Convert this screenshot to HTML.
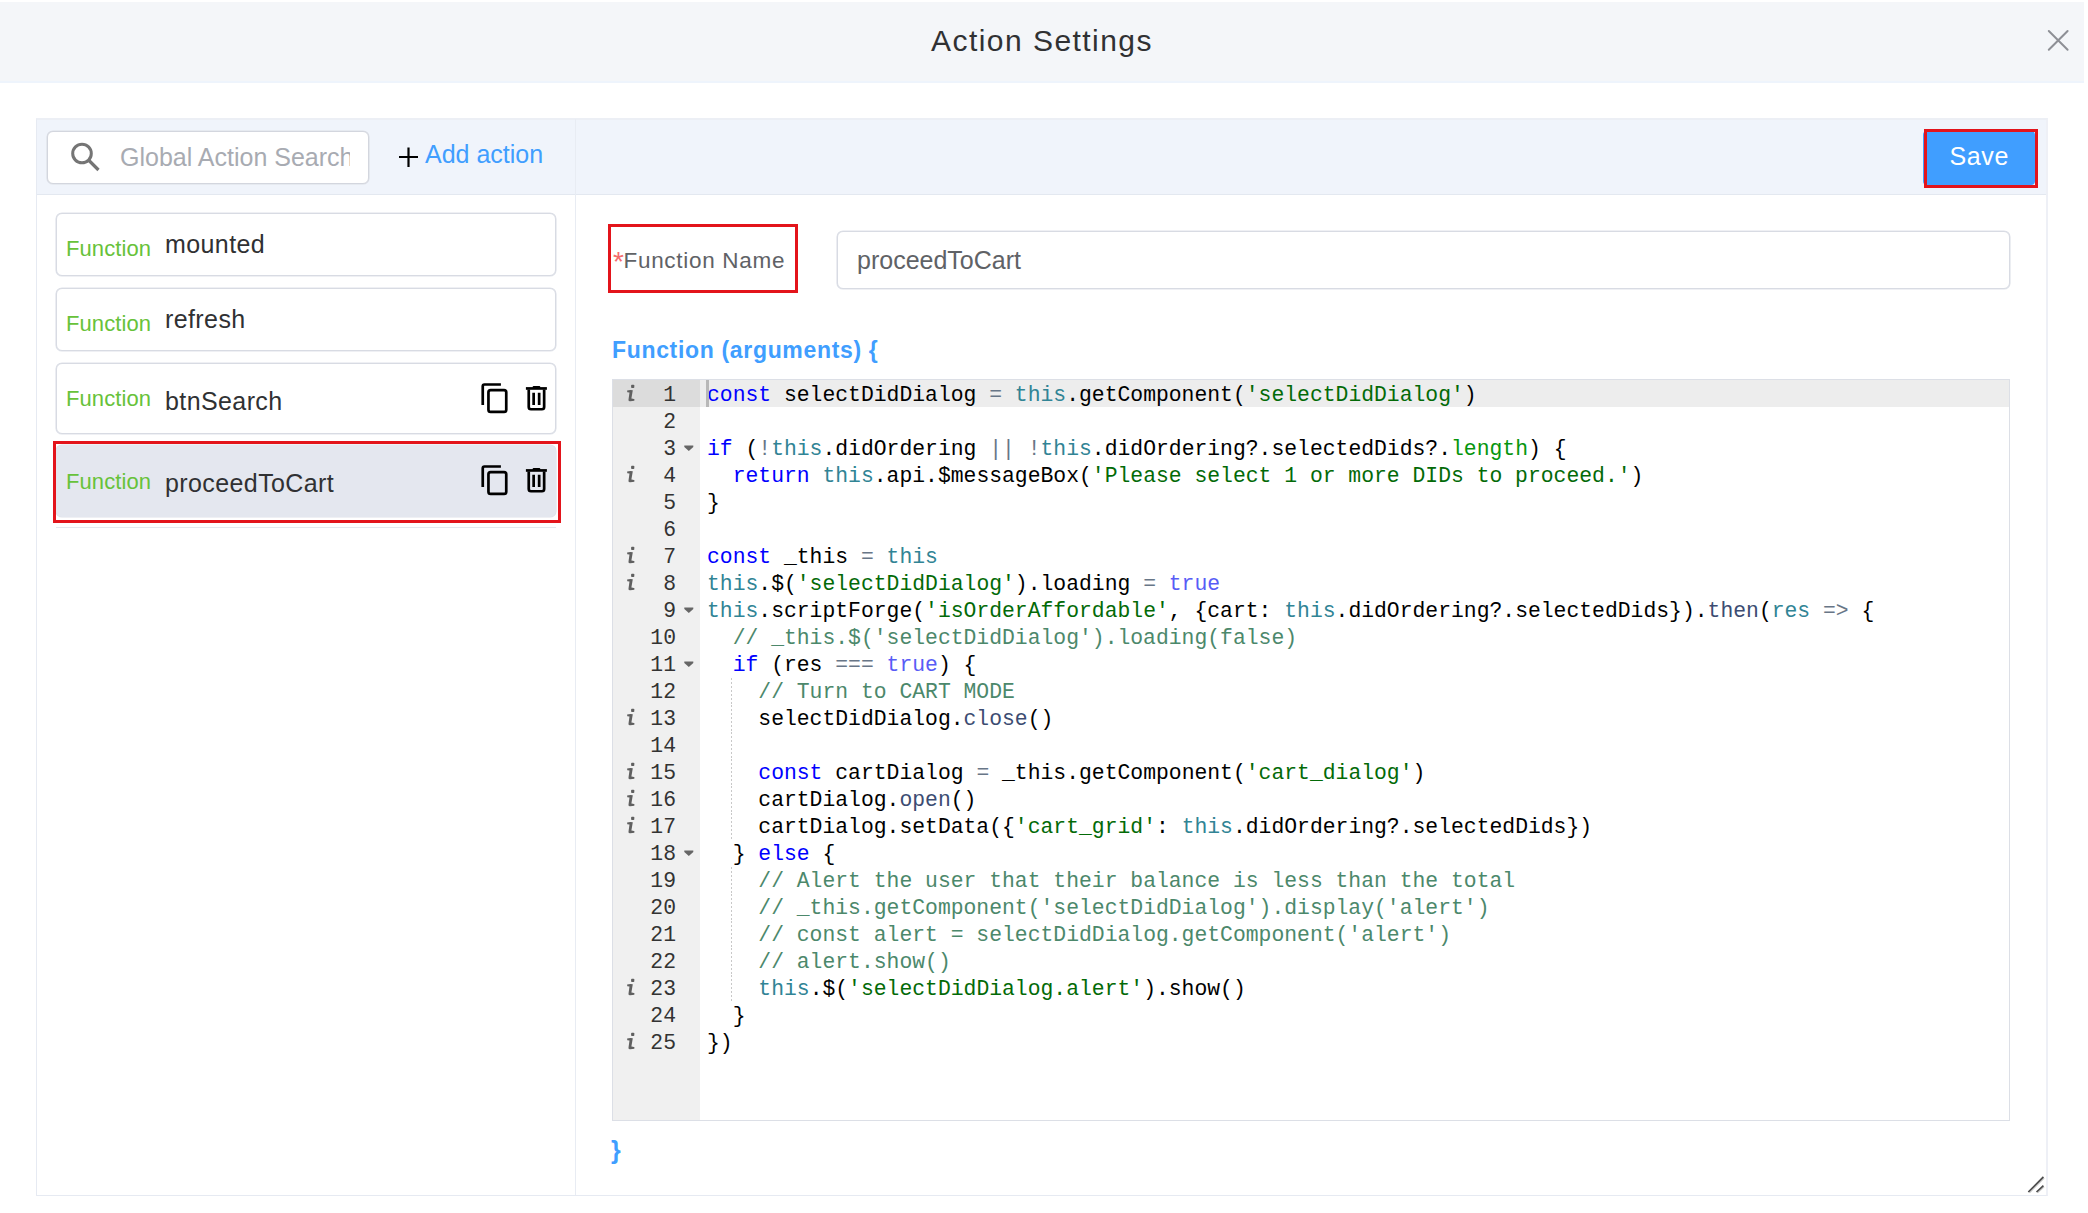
<!DOCTYPE html>
<html><head><meta charset="utf-8"><style>
*{box-sizing:border-box;margin:0;padding:0}
html,body{width:2088px;height:1213px;overflow:hidden;background:#fff;position:relative;font-family:"Liberation Sans",sans-serif}
.a{position:absolute}
#hdr{left:0;top:1.5px;width:2084px;height:79.5px;background:#f4f6f9}
#hdrb{left:0;top:81px;width:2084px;height:1.8px;background:#eef4fc}
#title{left:0;width:2084px;text-align:center;top:20.8px;font-size:30px;line-height:40px;color:#303133;letter-spacing:1.45px}
#panel{left:36px;top:118px;width:2012px;height:1078px;border:1px solid #e6eaf2;border-top:2px solid #eceff5;border-right:2px solid #eef0f6;background:#fff}
#tb{left:37px;top:120px;width:2009px;height:75px;background:#f0f4fb;border-bottom:1px solid #e3e8f0}
#vdiv{left:575px;top:119px;width:1px;height:1076px;background:#e8ecf3}
#search{left:47px;top:131px;width:322px;height:53px;border:1px solid #d3d6de;border-radius:6px;background:#fff;overflow:hidden;box-shadow:0 0 0 0.6px #dcdfe6}
#ph{left:72px;top:-1px;width:230px;overflow:hidden;white-space:nowrap;font-size:25px;line-height:52px;color:#a8abb2}
#add{left:425px;top:134.3px;font-size:25px;line-height:40px;color:#409eff}
.item{left:56px;width:500px;border:1px solid #d8dbe3;border-radius:6px;background:#fff;box-shadow:0 0 0 0.6px #dfe2e9}
.fn{font-size:22px;color:#67c23a;letter-spacing:0.1px;white-space:nowrap}
.nm{font-size:25px;color:#303133;letter-spacing:0.4px;white-space:nowrap}
.red{border:3px solid #e3141b}
#save{left:1923px;top:131px;width:112px;height:54px;background:#409eff;border-radius:4px}
#savet{left:1923px;top:131px;width:112px;height:54px;text-align:center;font-size:25px;line-height:51px;color:#fff;letter-spacing:0.6px;text-indent:0.6px}
#ast{left:613px;top:242px;font-size:28px;line-height:40px;color:#f56c6c}
#lbl{left:623.5px;top:240.9px;font-size:22.5px;line-height:40px;color:#606266;letter-spacing:0.7px;white-space:nowrap}
#lbl b{color:#f56c6c;font-weight:normal;font-size:28px;position:relative;top:1px;letter-spacing:0}
#inp{left:837px;top:231px;width:1173px;height:58px;border:1px solid #d8dbe3;border-radius:6px;background:#fff;box-shadow:0 0 0 0.6px #dfe2e9}
#inpt{left:857px;top:240px;font-size:25px;line-height:40px;color:#606266}
#fa{left:612px;top:330px;font-size:23px;line-height:40px;color:#409eff;font-weight:bold;letter-spacing:0.67px;white-space:nowrap}
#ed{left:612px;top:379px;width:1398px;height:742px;border:1px solid #dcdfe6;background:#fff;overflow:hidden}
#gut{left:613px;top:380px;width:87px;height:740px;background:#f0f0f0}
#agut{left:613px;top:380px;width:87px;height:27px;background:#dcdcdc}
#aline{left:700px;top:380px;width:1309px;height:27px;background:#ededed}
#cursor{left:706.4px;top:380px;width:2.6px;height:27px;background:#b8b8b8}
.cl{position:absolute;left:707px;height:27px;line-height:27px;font-family:"Liberation Mono",monospace;font-size:21.38px;white-space:pre;color:#000;margin-top:1px}
.gn{position:absolute;left:613px;width:63px;text-align:right;height:27px;line-height:27px;font-family:"Liberation Mono",monospace;font-size:21.38px;color:#333;margin-top:1px}
.gi{position:absolute;left:622px}
.gf{position:absolute;left:684px;margin-top:10.2px}
.ig{position:absolute;left:731px;width:1px;height:27px;background:repeating-linear-gradient(to bottom,#c8c8c8 0 2px,transparent 2px 4px)}
k{color:#0000ff} v{color:#318495} s{color:#036a07;text-decoration:none} c{color:#4c886b} o{color:#687687} t{color:#585cf6} n{color:#06960e} f{color:#3c4c72}
#cb{left:611px;top:1130px;font-size:25px;line-height:40px;color:#409eff;font-weight:bold}
</style></head><body>
<svg width="0" height="0" style="position:absolute"><defs><filter id="bl" x="-50%" y="-50%" width="200%" height="200%"><feGaussianBlur stdDeviation="0.7"/></filter><filter id="bl2" x="-50%" y="-50%" width="200%" height="200%"><feGaussianBlur stdDeviation="0.35"/></filter></defs></svg>
<div class="a" id="hdr"></div><div class="a" id="hdrb"></div>
<div class="a" id="title">Action Settings</div>
<svg class="a" style="left:2044px;top:27px" width="28" height="28" viewBox="0 0 28 28"><path d="M4.8 4 L23.6 22.8 M23.6 4 L4.8 22.8" stroke="#8e9096" stroke-width="2" stroke-linecap="round"/></svg>
<div class="a" id="panel"></div>
<div class="a" id="tb"></div>
<div class="a" id="vdiv"></div>
<div class="a" id="search"><svg class="a" style="left:19px;top:7px" width="36" height="36" viewBox="0 0 36 36"><circle cx="15" cy="14.5" r="9.3" fill="none" stroke="#757575" stroke-width="3"/><path d="M21.5 21 L31.5 31" stroke="#757575" stroke-width="3.2"/></svg><div class="a" id="ph">Global Action Search</div></div>
<svg class="a" style="left:398px;top:146px" width="22" height="22" viewBox="0 0 22 22"><path d="M1 11 H20 M10.5 1.5 V21" stroke="#000" stroke-width="2.2"/></svg>
<div class="a" id="add">Add action</div>
<div class="a" id="save"></div>
<div class="a" id="savet">Save</div>
<div class="a red" style="left:1924px;top:129px;width:114px;height:59px"></div>

<div class="a item" style="top:213px;height:63px"></div>
<div class="a fn" style="left:66px;top:234px;line-height:30px">Function</div>
<div class="a nm" style="left:165px;top:229px;line-height:30px">mounted</div>

<div class="a item" style="top:288px;height:63px"></div>
<div class="a fn" style="left:66px;top:309px;line-height:30px">Function</div>
<div class="a nm" style="left:165px;top:304px;line-height:30px">refresh</div>

<div class="a item" style="top:363px;height:71px"></div>
<div class="a fn" style="left:66px;top:384px;line-height:30px">Function</div>
<div class="a nm" style="left:165px;top:386px;line-height:30px">btnSearch</div>

<div class="a item" style="top:445px;height:72px;background:#e4e7ef;border-color:#e4e7ef"></div>
<div class="a fn" style="left:66px;top:467px;line-height:30px">Function</div>
<div class="a nm" style="left:165px;top:468px;line-height:30px">proceedToCart</div>
<div class="a red" style="left:53px;top:441px;width:508px;height:82px"></div>
<div class="a" style="left:56px;top:527px;width:500px;height:1px;background:#e4e7ed"></div>

<svg class="a" style="left:480px;top:383px" width="30" height="32" viewBox="0 0 30 32"><path d="M2.75 21.9 V3.2 Q2.75 1.5 4.4 1.5 H20.9" fill="none" stroke="#000" stroke-width="2.7"/><rect x="8.45" y="7.15" width="17.8" height="21.8" rx="2.2" fill="none" stroke="#000" stroke-width="2.7"/></svg>
<svg class="a" style="left:524px;top:385px" width="26" height="28" viewBox="0 0 26 28"><rect x="8.6" y="1.0" width="7.7" height="2.6" rx="1" fill="#000"/><path d="M1.9 3.45 H22.9" stroke="#000" stroke-width="2.7"/><path d="M4.75 4.5 V22 Q4.75 24.25 7 24.25 H17.9 Q20.15 24.25 20.15 22 V4.5" fill="none" stroke="#000" stroke-width="2.7"/><path d="M9.65 7.8 V19.9 M15.15 7.8 V19.9" stroke="#000" stroke-width="2.7"/></svg><svg class="a" style="left:480px;top:465px" width="30" height="32" viewBox="0 0 30 32"><path d="M2.75 21.9 V3.2 Q2.75 1.5 4.4 1.5 H20.9" fill="none" stroke="#000" stroke-width="2.7"/><rect x="8.45" y="7.15" width="17.8" height="21.8" rx="2.2" fill="none" stroke="#000" stroke-width="2.7"/></svg>
<svg class="a" style="left:524px;top:467px" width="26" height="28" viewBox="0 0 26 28"><rect x="8.6" y="1.0" width="7.7" height="2.6" rx="1" fill="#000"/><path d="M1.9 3.45 H22.9" stroke="#000" stroke-width="2.7"/><path d="M4.75 4.5 V22 Q4.75 24.25 7 24.25 H17.9 Q20.15 24.25 20.15 22 V4.5" fill="none" stroke="#000" stroke-width="2.7"/><path d="M9.65 7.8 V19.9 M15.15 7.8 V19.9" stroke="#000" stroke-width="2.7"/></svg>

<div class="a red" style="left:608px;top:224px;width:190px;height:69px"></div>
<div class="a" id="ast">*</div><div class="a" id="lbl">Function Name</div>
<div class="a" id="inp"></div>
<div class="a" id="inpt">proceedToCart</div>
<div class="a" id="fa">Function (arguments) {</div>

<div class="a" id="ed"></div>
<div class="a" id="gut"></div>
<div class="a" id="agut"></div>
<div class="a" id="aline"></div>
<div class="gn" style="top:380.50px">1</div><svg class="gi" style="top:380.50px" width="16" height="24" viewBox="0 0 16 24"><g filter="url(#bl)" fill="#606060"><rect x="9.1" y="3.8" width="3.2" height="3.2" rx="0.8"/><path d="M5.1 9.4 Q8 8.8 10.8 9.2 L9.4 17.6 Q11 17.8 12.5 18.3 L12.3 19.8 Q10 20.3 7.6 20.2 Q6.2 19.9 6.5 18.4 L7.5 11.4 L5.3 11.3 Z"/></g></svg><div class="gn" style="top:407.50px">2</div><div class="gn" style="top:434.50px">3</div><svg class="gf" style="top:434.50px" width="10" height="8" viewBox="0 0 10 8"><path d="M0.3 0.5 H9.3 V1.9 L4.8 5.9 L0.3 1.9 Z" fill="#666" filter="url(#bl2)"/></svg><div class="gn" style="top:461.50px">4</div><svg class="gi" style="top:461.50px" width="16" height="24" viewBox="0 0 16 24"><g filter="url(#bl)" fill="#606060"><rect x="9.1" y="3.8" width="3.2" height="3.2" rx="0.8"/><path d="M5.1 9.4 Q8 8.8 10.8 9.2 L9.4 17.6 Q11 17.8 12.5 18.3 L12.3 19.8 Q10 20.3 7.6 20.2 Q6.2 19.9 6.5 18.4 L7.5 11.4 L5.3 11.3 Z"/></g></svg><div class="gn" style="top:488.50px">5</div><div class="gn" style="top:515.50px">6</div><div class="gn" style="top:542.50px">7</div><svg class="gi" style="top:542.50px" width="16" height="24" viewBox="0 0 16 24"><g filter="url(#bl)" fill="#606060"><rect x="9.1" y="3.8" width="3.2" height="3.2" rx="0.8"/><path d="M5.1 9.4 Q8 8.8 10.8 9.2 L9.4 17.6 Q11 17.8 12.5 18.3 L12.3 19.8 Q10 20.3 7.6 20.2 Q6.2 19.9 6.5 18.4 L7.5 11.4 L5.3 11.3 Z"/></g></svg><div class="gn" style="top:569.50px">8</div><svg class="gi" style="top:569.50px" width="16" height="24" viewBox="0 0 16 24"><g filter="url(#bl)" fill="#606060"><rect x="9.1" y="3.8" width="3.2" height="3.2" rx="0.8"/><path d="M5.1 9.4 Q8 8.8 10.8 9.2 L9.4 17.6 Q11 17.8 12.5 18.3 L12.3 19.8 Q10 20.3 7.6 20.2 Q6.2 19.9 6.5 18.4 L7.5 11.4 L5.3 11.3 Z"/></g></svg><div class="gn" style="top:596.50px">9</div><svg class="gf" style="top:596.50px" width="10" height="8" viewBox="0 0 10 8"><path d="M0.3 0.5 H9.3 V1.9 L4.8 5.9 L0.3 1.9 Z" fill="#666" filter="url(#bl2)"/></svg><div class="gn" style="top:623.50px">10</div><div class="gn" style="top:650.50px">11</div><svg class="gf" style="top:650.50px" width="10" height="8" viewBox="0 0 10 8"><path d="M0.3 0.5 H9.3 V1.9 L4.8 5.9 L0.3 1.9 Z" fill="#666" filter="url(#bl2)"/></svg><div class="gn" style="top:677.50px">12</div><div class="gn" style="top:704.50px">13</div><svg class="gi" style="top:704.50px" width="16" height="24" viewBox="0 0 16 24"><g filter="url(#bl)" fill="#606060"><rect x="9.1" y="3.8" width="3.2" height="3.2" rx="0.8"/><path d="M5.1 9.4 Q8 8.8 10.8 9.2 L9.4 17.6 Q11 17.8 12.5 18.3 L12.3 19.8 Q10 20.3 7.6 20.2 Q6.2 19.9 6.5 18.4 L7.5 11.4 L5.3 11.3 Z"/></g></svg><div class="gn" style="top:731.50px">14</div><div class="gn" style="top:758.50px">15</div><svg class="gi" style="top:758.50px" width="16" height="24" viewBox="0 0 16 24"><g filter="url(#bl)" fill="#606060"><rect x="9.1" y="3.8" width="3.2" height="3.2" rx="0.8"/><path d="M5.1 9.4 Q8 8.8 10.8 9.2 L9.4 17.6 Q11 17.8 12.5 18.3 L12.3 19.8 Q10 20.3 7.6 20.2 Q6.2 19.9 6.5 18.4 L7.5 11.4 L5.3 11.3 Z"/></g></svg><div class="gn" style="top:785.50px">16</div><svg class="gi" style="top:785.50px" width="16" height="24" viewBox="0 0 16 24"><g filter="url(#bl)" fill="#606060"><rect x="9.1" y="3.8" width="3.2" height="3.2" rx="0.8"/><path d="M5.1 9.4 Q8 8.8 10.8 9.2 L9.4 17.6 Q11 17.8 12.5 18.3 L12.3 19.8 Q10 20.3 7.6 20.2 Q6.2 19.9 6.5 18.4 L7.5 11.4 L5.3 11.3 Z"/></g></svg><div class="gn" style="top:812.50px">17</div><svg class="gi" style="top:812.50px" width="16" height="24" viewBox="0 0 16 24"><g filter="url(#bl)" fill="#606060"><rect x="9.1" y="3.8" width="3.2" height="3.2" rx="0.8"/><path d="M5.1 9.4 Q8 8.8 10.8 9.2 L9.4 17.6 Q11 17.8 12.5 18.3 L12.3 19.8 Q10 20.3 7.6 20.2 Q6.2 19.9 6.5 18.4 L7.5 11.4 L5.3 11.3 Z"/></g></svg><div class="gn" style="top:839.50px">18</div><svg class="gf" style="top:839.50px" width="10" height="8" viewBox="0 0 10 8"><path d="M0.3 0.5 H9.3 V1.9 L4.8 5.9 L0.3 1.9 Z" fill="#666" filter="url(#bl2)"/></svg><div class="gn" style="top:866.50px">19</div><div class="gn" style="top:893.50px">20</div><div class="gn" style="top:920.50px">21</div><div class="gn" style="top:947.50px">22</div><div class="gn" style="top:974.50px">23</div><svg class="gi" style="top:974.50px" width="16" height="24" viewBox="0 0 16 24"><g filter="url(#bl)" fill="#606060"><rect x="9.1" y="3.8" width="3.2" height="3.2" rx="0.8"/><path d="M5.1 9.4 Q8 8.8 10.8 9.2 L9.4 17.6 Q11 17.8 12.5 18.3 L12.3 19.8 Q10 20.3 7.6 20.2 Q6.2 19.9 6.5 18.4 L7.5 11.4 L5.3 11.3 Z"/></g></svg><div class="gn" style="top:1001.50px">24</div><div class="gn" style="top:1028.50px">25</div><svg class="gi" style="top:1028.50px" width="16" height="24" viewBox="0 0 16 24"><g filter="url(#bl)" fill="#606060"><rect x="9.1" y="3.8" width="3.2" height="3.2" rx="0.8"/><path d="M5.1 9.4 Q8 8.8 10.8 9.2 L9.4 17.6 Q11 17.8 12.5 18.3 L12.3 19.8 Q10 20.3 7.6 20.2 Q6.2 19.9 6.5 18.4 L7.5 11.4 L5.3 11.3 Z"/></g></svg>
<div class="cl" style="top:380.50px"><k>const</k> selectDidDialog <o>=</o> <v>this</v>.getComponent(<s>'selectDidDialog'</s>)</div><div class="cl" style="top:407.50px"></div><div class="cl" style="top:434.50px"><k>if</k> (<o>!</o><v>this</v>.didOrdering <o>||</o> <o>!</o><v>this</v>.didOrdering?.selectedDids?.<n>length</n>) {</div><div class="cl" style="top:461.50px">  <k>return</k> <v>this</v>.api.$messageBox(<s>'Please select 1 or more DIDs to proceed.'</s>)</div><div class="cl" style="top:488.50px">}</div><div class="cl" style="top:515.50px"></div><div class="cl" style="top:542.50px"><k>const</k> _this <o>=</o> <v>this</v></div><div class="cl" style="top:569.50px"><v>this</v>.$(<s>'selectDidDialog'</s>).loading <o>=</o> <t>true</t></div><div class="cl" style="top:596.50px"><v>this</v>.scriptForge(<s>'isOrderAffordable'</s>, {cart: <v>this</v>.didOrdering?.selectedDids}).<f>then</f>(<v>res</v> <o>=&gt;</o> {</div><div class="cl" style="top:623.50px">  <c>// _this.$('selectDidDialog').loading(false)</c></div><div class="cl" style="top:650.50px">  <k>if</k> (res <o>===</o> <t>true</t>) {</div><div class="cl" style="top:677.50px">    <c>// Turn to CART MODE</c></div><div class="cl" style="top:704.50px">    selectDidDialog.<f>close</f>()</div><div class="cl" style="top:731.50px"></div><div class="cl" style="top:758.50px">    <k>const</k> cartDialog <o>=</o> _this.getComponent(<s>'cart_dialog'</s>)</div><div class="cl" style="top:785.50px">    cartDialog.<f>open</f>()</div><div class="cl" style="top:812.50px">    cartDialog.setData({<s>'cart_grid'</s>: <v>this</v>.didOrdering?.selectedDids})</div><div class="cl" style="top:839.50px">  } <k>else</k> {</div><div class="cl" style="top:866.50px">    <c>// Alert the user that their balance is less than the total</c></div><div class="cl" style="top:893.50px">    <c>// _this.getComponent('selectDidDialog').display('alert')</c></div><div class="cl" style="top:920.50px">    <c>// const alert = selectDidDialog.getComponent('alert')</c></div><div class="cl" style="top:947.50px">    <c>// alert.show()</c></div><div class="cl" style="top:974.50px">    <v>this</v>.$(<s>'selectDidDialog.alert'</s>).show()</div><div class="cl" style="top:1001.50px">  }</div><div class="cl" style="top:1028.50px">})</div><div class="ig" style="top:677.50px"></div><div class="ig" style="top:704.50px"></div><div class="ig" style="top:731.50px"></div><div class="ig" style="top:758.50px"></div><div class="ig" style="top:785.50px"></div><div class="ig" style="top:812.50px"></div><div class="ig" style="top:866.50px"></div><div class="ig" style="top:893.50px"></div><div class="ig" style="top:920.50px"></div><div class="ig" style="top:947.50px"></div><div class="ig" style="top:974.50px"></div>
<div class="a" id="cursor"></div>
<div class="a" id="cb">}</div>
<svg class="a" style="left:2024px;top:1172px" width="24" height="24" viewBox="0 0 24 24"><path d="M5.3 20.6 L20 5.9 M13.3 20.6 L20 14.6" stroke="#c8c8c8" stroke-width="1.6"/><path d="M4.3 20 L19.4 4.9 M12.5 20 L19.4 13.6" stroke="#4a4a4a" stroke-width="1.6"/></svg>
</body></html>
